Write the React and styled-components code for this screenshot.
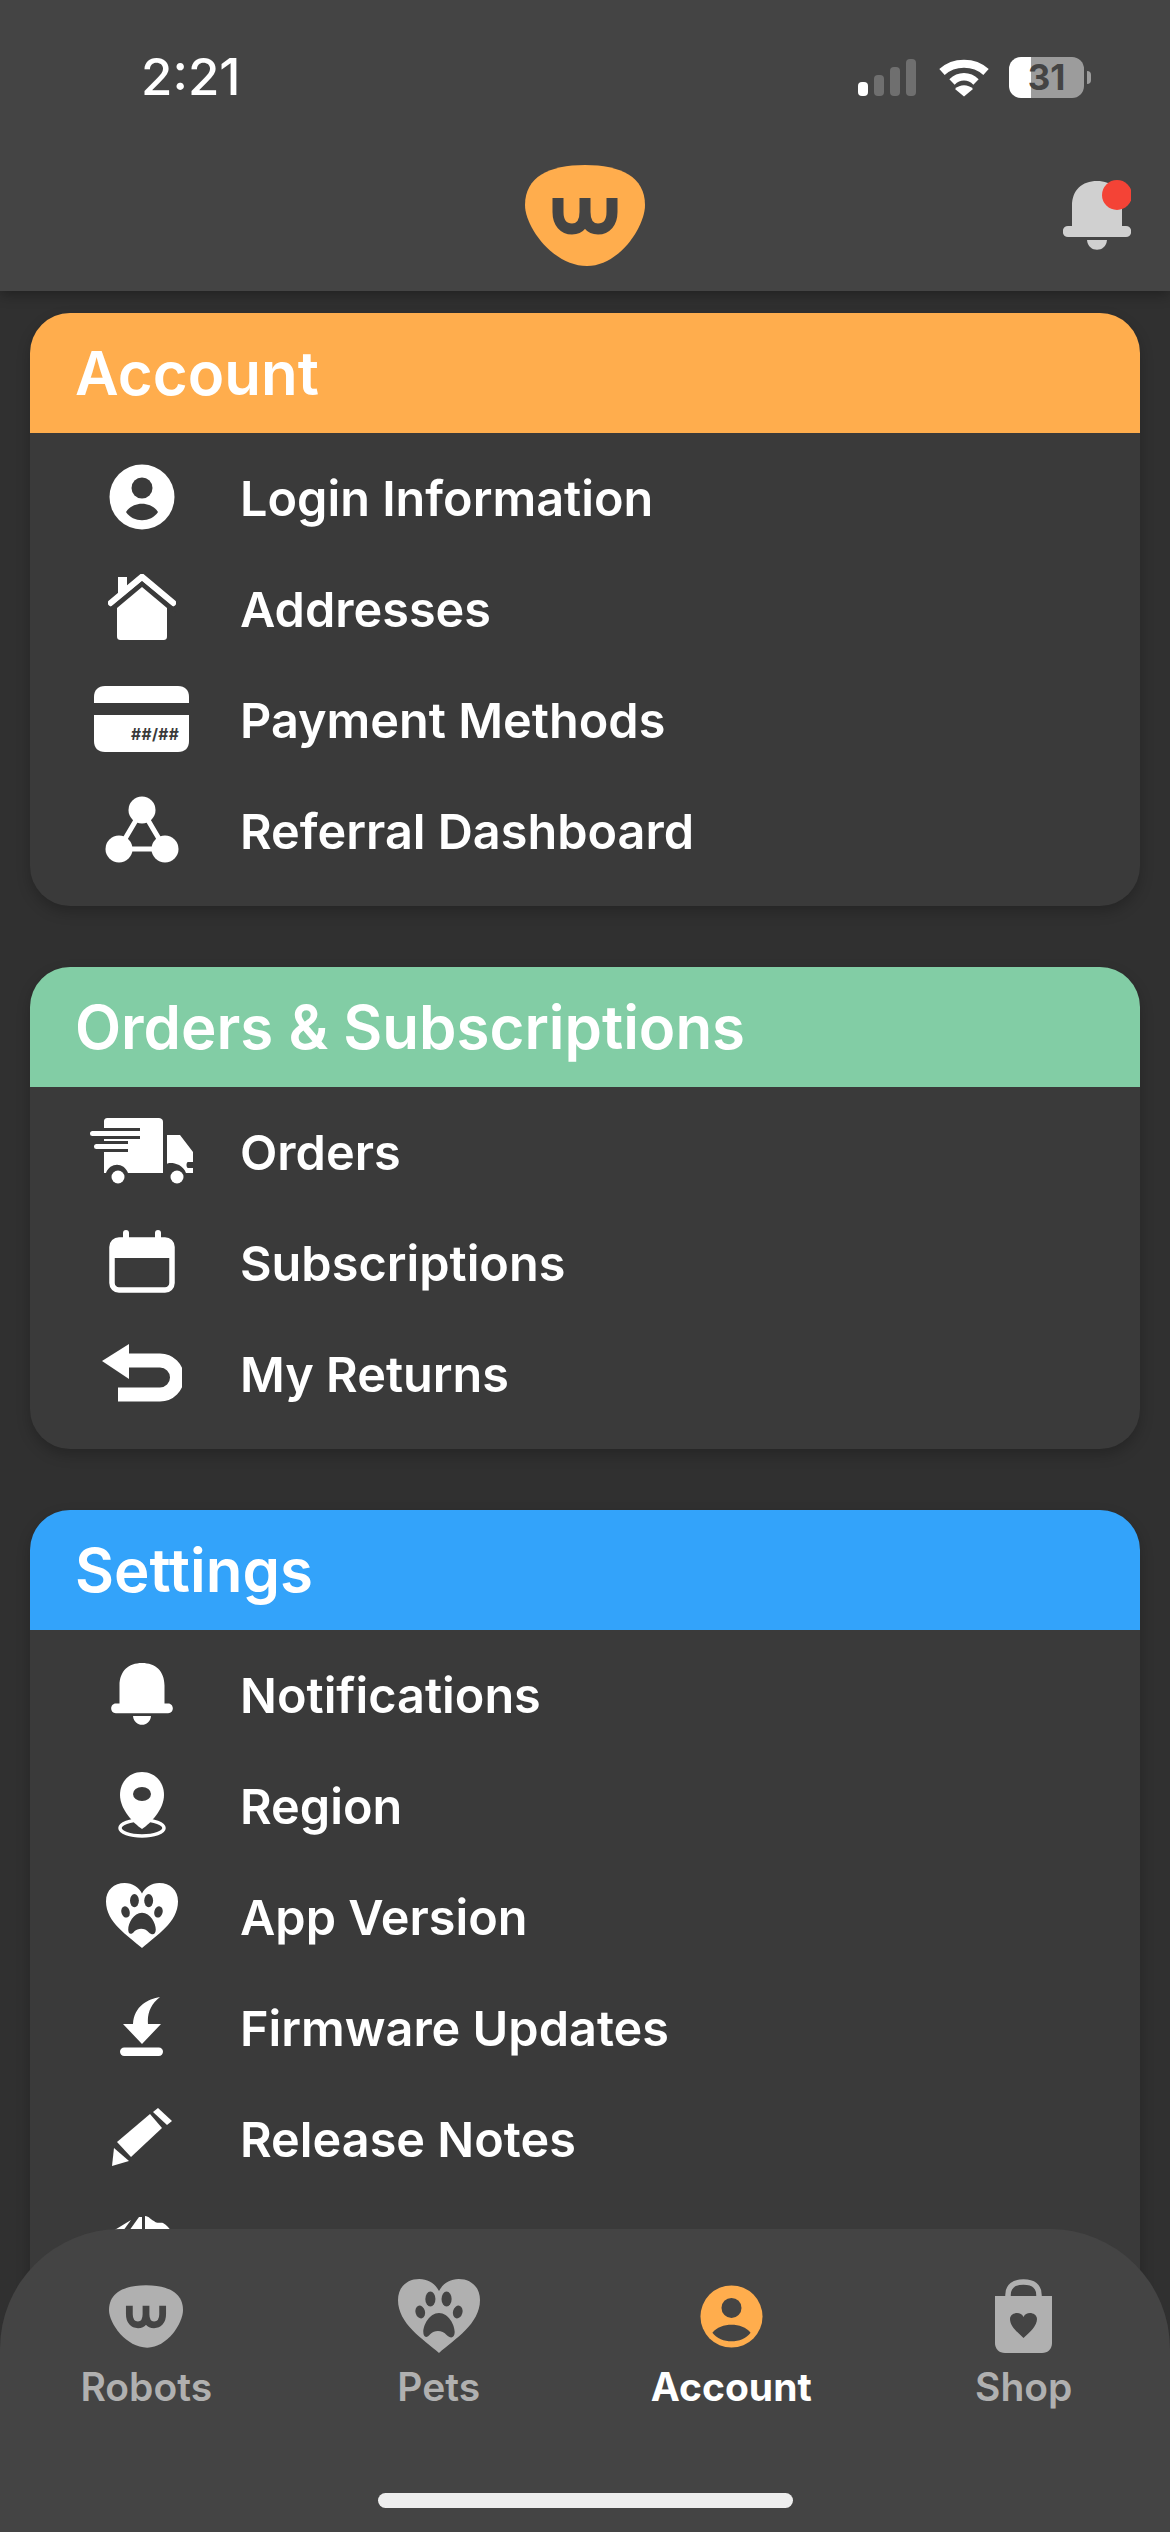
import React from 'react';
import styled, { createGlobalStyle } from 'styled-components';

const GlobalStyle = createGlobalStyle`
  html, body {
    margin: 0;
    padding: 0;
    background: #303030;
    font-family: 'Inter', 'Liberation Sans', sans-serif;
  }
`;

const Screen = styled.div`
  position: relative;
  width: 1170px;
  height: 2532px;
  display: flex;
  flex-direction: column;
  overflow: hidden;
  background: #303030;
`;

const Header = styled.header`
  position: relative;
  z-index: 2;
  flex: none;
  height: 291px;
  background: #444444;
  box-shadow: 0 4px 12px rgba(0, 0, 0, 0.3);
`;

const StatusBar = styled.div`
  height: 165px;
  display: flex;
  align-items: flex-start;
  justify-content: space-between;
  padding: 0 79px 0 141px;
  box-sizing: border-box;
`;

const Clock = styled.span`
  margin-top: 47px;
  font-size: 51px;
  line-height: 60px;
  font-weight: 500;
  color: #ffffff;
`;

const StatusIcons = styled.div`
  display: flex;
  align-items: center;
  gap: 22px;
  margin-top: 57px;
`;

const Battery = styled.div`
  width: 75px;
  height: 41px;
  border-radius: 12px;
  overflow: hidden;
  background: linear-gradient(to right, #ffffff 30%, #9c9c9c 30%);
  display: flex;
  align-items: center;
  justify-content: center;
`;

const BatteryText = styled.span`
  font-size: 35px;
  font-weight: 700;
  line-height: 41px;
  color: #444444;
`;

const BatteryGroup = styled.div`
  display: flex;
  align-items: center;
  gap: 3px;
  margin-left: -3px;
`;

const BatteryNub = styled.div`
  width: 4px;
  height: 13px;
  border-radius: 0 7px 7px 0;
  background: #9c9c9c;
`;

const TopBar = styled.div`
  display: grid;
  grid-template-columns: 1fr 120px 1fr;
  align-items: flex-start;
`;

const LogoSlot = styled.div`
  grid-column: 2;
  display: flex;
`;

const BellSlot = styled.div`
  grid-column: 3;
  justify-self: end;
  margin: 15px 39px 0 0;
  display: flex;
`;

const Content = styled.main`
  flex: 1;
  min-height: 0;
  padding: 22px 30px 0;
  display: flex;
  flex-direction: column;
  gap: 61px;
  overflow: hidden;
`;

const Card = styled.section`
  flex: none;
  border-radius: 40px;
  overflow: hidden;
  background: #3a3a3a;
  box-shadow: 0 6px 14px rgba(0, 0, 0, 0.22);
`;

const CardHeader = styled.h2`
  margin: 0;
  height: 120px;
  padding-left: 45px;
  display: flex;
  align-items: center;
  background: ${(p) => p.$color};
  color: #ffffff;
  font-size: 60px;
  font-weight: 600;
`;

const CardBody = styled.div`
  padding: 8px 0 21px;
`;

const Row = styled.div`
  height: 111px;
  display: flex;
  align-items: center;
`;

const IconSlot = styled.div`
  flex: none;
  width: 197px;
  margin-left: 13px;
  display: flex;
  align-items: center;
  justify-content: center;
`;

const RowLabel = styled.span`
  margin-top: 3px;
  font-size: 48.6px;
  font-weight: 600;
  color: #ffffff;
`;

const BottomNav = styled.nav`
  position: absolute;
  z-index: 3;
  left: 0;
  right: 0;
  bottom: 0;
  height: 303px;
  border-radius: 120px 120px 0 0;
  background: #444444;
  box-sizing: border-box;
  padding-top: 50px;
`;

const Tabs = styled.div`
  display: grid;
  grid-template-columns: repeat(4, 1fr);
`;

const Tab = styled.div`
  display: flex;
  flex-direction: column;
  align-items: center;
`;

const TabIcon = styled.div`
  height: 74px;
  display: flex;
  align-items: center;
  justify-content: center;
`;

const TabLabel = styled.span`
  margin-top: 12px;
  font-size: 39px;
  line-height: 44px;
  font-weight: ${(p) => (p.$active ? 700 : 600)};
  color: ${(p) => (p.$active ? '#ffffff' : '#b0b0b0')};
`;

const HomeBar = styled.div`
  position: absolute;
  left: 378px;
  bottom: 24px;
  width: 415px;
  height: 15px;
  border-radius: 8px;
  background: #eeeeee;
`;

const DARK = '#3a3a3a';
const NAV = '#444444';
const MUTED = '#b0b0b0';

const Signal = () => (
  <svg width="58" height="37" viewBox="0 0 58 37">
    <rect x="0" y="23" width="10" height="14" rx="4" fill="#fff" />
    <rect x="16" y="16" width="10" height="21" rx="4" fill="#6f6f6f" />
    <rect x="32" y="8" width="10" height="29" rx="4" fill="#6f6f6f" />
    <rect x="48" y="0" width="10" height="37" rx="4" fill="#6f6f6f" />
  </svg>
);

const Wifi = () => (
  <svg width="52" height="38" viewBox="0 0 52 38" fill="none">
    <path d="M4 13 C16 2 36 2 48 13" stroke="#fff" strokeWidth="8" />
    <path d="M14 23 C21 16 31 16 38 23" stroke="#fff" strokeWidth="7.5" />
    <path d="M26 37.5 L17 30 C22 25 30 25 35 30 Z" fill="#fff" />
  </svg>
);

const Logo = ({ width, height, fill, mark }) => (
  <svg width={width} height={height} viewBox="0 0 120 101" fill="none">
    <path
      d="M60 0 C96 0 120 12 120 40 C120 62 94 101 62 101 C28 101 0 62 0 40 C0 12 24 0 60 0 Z"
      fill={fill}
    />
    <path
      d="M33 33 V47 C33 58 39 64 47 64 C55 64 60 58 60 47 V33 M60 47 C60 58 65 64 73 64 C81 64 87 58 87 47 V33"
      stroke={mark}
      strokeWidth="11"
    />
  </svg>
);

const BellShape = ({ width, height, fill, dot }) => (
  <svg width={width} height={height} viewBox="0 0 68 70">
    <path
      d="M9 46 V26 C9 10 19 1 34 1 C49 1 59 10 59 26 V46 H63 C70 46 70 57 63 57 H5 C-2 57 -2 46 5 46 Z"
      fill={fill}
    />
    <path d="M24 60 H44 C43 73 25 73 24 60 Z" fill={fill} />
    {dot && <circle cx="54" cy="15" r="15" fill="#f44336" />}
  </svg>
);

const PersonCircle = ({ size, fill, cut, wide }) => (
  <svg width={size} height={size} viewBox="0 0 66 66">
    <circle cx="33" cy="33" r="32.5" fill={fill} />
    <circle cx="33" cy="24" r="10.5" fill={cut} />
    {wide ? (
      <path d="M13 50 C22 39 44 39 53 50 C44 62 22 62 13 50 Z" fill={cut} />
    ) : (
      <path d="M17 48 C24 37 42 37 49 48 C42 59 24 59 17 48 Z" fill={cut} />
    )}
  </svg>
);

const HouseIcon = () => (
  <svg width="68" height="67" viewBox="0 0 68 67" fill="#fff">
    <path d="M34 13 L59 34 V62 C59 65 58 66 55 66 H13 C10 66 9 65 9 62 V34 Z" />
    <path d="M10 3 H19 V17 L10 25 Z" />
    <path d="M3 29 L34 3 L65 29" fill="none" stroke="#fff" strokeWidth="6.5" strokeLinecap="round" />
    <path d="M0 37 L34 9 L68 37" fill="none" stroke={DARK} strokeWidth="3" />
  </svg>
);

const CardIcon = () => (
  <svg width="95" height="66" viewBox="0 0 95 66">
    <path d="M0 17 V11 C0 4 4 0 11 0 H84 C91 0 95 4 95 11 V17 Z" fill="#fff" />
    <path d="M0 29 H95 V55 C95 62 91 66 84 66 H11 C4 66 0 62 0 55 Z" fill="#fff" />
    <text x="37" y="54" fontFamily="Inter, sans-serif" fontSize="15.5" fontWeight="700" fill={DARK} letterSpacing="0.4">
      ##/##
    </text>
  </svg>
);

const NetworkIcon = () => (
  <svg width="74" height="67" viewBox="0 0 74 67" fill="#fff">
    <path d="M37 14 L14 53 H60 Z" fill="none" stroke="#fff" strokeWidth="5" />
    <circle cx="37" cy="14" r="13.5" />
    <circle cx="14" cy="53" r="13.5" />
    <circle cx="60" cy="53" r="13.5" />
  </svg>
);

const TruckIcon = () => (
  <svg width="104" height="66" viewBox="0 0 104 66" fill="#fff">
    <path d="M14 4 C14 1 15 0 18 0 H68 C71 0 73 1 73 4 V55 H38 C34 44 20 44 16 55 H14 Z" />
    <path d="M77 17 H90 L103 34 V44 H98 C96 44 96 50 98 50 H103 V55 H96 C92 44 78 44 77 46 Z" />
    <rect x="14" y="10" width="36" height="3" fill={DARK} />
    <rect x="14" y="18" width="36" height="3" fill={DARK} />
    <rect x="14" y="23" width="24" height="3" fill={DARK} />
    <rect x="14" y="31" width="24" height="3" fill={DARK} />
    <rect x="0" y="13" width="50" height="5" rx="2.5" />
    <rect x="4" y="26" width="33" height="5" rx="2.5" />
    <circle cx="28" cy="59" r="6.5" />
    <circle cx="87" cy="59" r="6.5" />
  </svg>
);

const CalendarIcon = () => (
  <svg width="66" height="63" viewBox="0 0 66 63">
    <rect x="3" y="10" width="60" height="50" rx="7" fill="none" stroke="#fff" strokeWidth="5.5" />
    <rect x="3" y="10" width="60" height="18" rx="6" fill="#fff" />
    <rect x="3" y="20" width="60" height="8" fill="#fff" />
    <rect x="14" y="0" width="6" height="14" rx="3" fill="#fff" />
    <rect x="46" y="0" width="6" height="14" rx="3" fill="#fff" />
  </svg>
);

const ReturnIcon = () => (
  <svg width="80" height="58" viewBox="0 0 80 58" fill="none">
    <path d="M27 0 V35 L0 17 Z" fill="#fff" />
    <path d="M24 16.5 H58 A17 17 0 0 1 58 50.5 H16" stroke="#fff" strokeWidth="14" />
  </svg>
);

const PinIcon = () => (
  <svg width="48" height="66" viewBox="0 0 48 66">
    <ellipse cx="24" cy="56" rx="22" ry="8" fill="none" stroke="#fff" strokeWidth="3.5" />
    <path d="M24 0 C37 0 46 10 46 23 C46 37 33 51 24 57 C15 51 2 37 2 23 C2 10 11 0 24 0 Z" fill="#fff" />
    <ellipse cx="24" cy="22" rx="9" ry="7" fill={DARK} />
  </svg>
);

const PawHeart = ({ width, height, fill, cut }) => (
  <svg width={width} height={height} viewBox="0 0 81 74" preserveAspectRatio="none">
    <path
      d="M40.5 74 C25 60 0 45 0 21 C0 8 9 0 21 0 C30 0 37 5 40.5 12 C44 5 51 0 60 0 C72 0 81 8 81 21 C81 45 56 60 40.5 74 Z"
      fill={fill}
    />
    <ellipse cx="32" cy="20" rx="5" ry="7.5" fill={cut} />
    <ellipse cx="48" cy="20" rx="5" ry="7.5" fill={cut} />
    <ellipse cx="22" cy="33" rx="4.7" ry="6.5" fill={cut} transform="rotate(-15 22 33)" />
    <ellipse cx="59" cy="33" rx="4.7" ry="6.5" fill={cut} transform="rotate(15 59 33)" />
    <path
      d="M40.5 34 C50 34 56 46 56 53 C56 59 52 60 48 56 C44 51 36 51 32 55 C28 60 25 58 25 53 C25 46 31 34 40.5 34 Z"
      fill={cut}
    />
  </svg>
);

const DownloadIcon = () => (
  <svg width="44" height="59" viewBox="0 0 44 59" fill="#fff">
    <path d="M40 0 C28 2 14 9 13 27 H3 L22 47 L41 27 H28 C27 16 31 7 40 0 Z" />
    <rect x="0" y="50.5" width="43" height="8.5" rx="4.2" />
  </svg>
);

const PencilIcon = () => (
  <svg width="60" height="59" viewBox="0 0 60 59" fill="#fff">
    <path d="M0 58 L2 40 L17 53 Z" />
    <path d="M5 34 L38 6 L50 20 L19 49 Z" />
    <path d="M41 4 L46 0 L60 13 L55 17 Z" />
  </svg>
);

const GlobeIcon = () => (
  <svg width="66" height="66" viewBox="0 0 66 66" fill="#fff">
    <path d="M4 15 L22 4 L14 15 Z" />
    <path d="M20 15 L30 1 L33 1 V15 Z" />
    <path d="M36 0 C40 0 42 4 45 5 C48 8 52 6 54 7 C58 9 60 12 62 15 H36 Z" />
    <path d="M4 17 H62 A33 33 0 1 1 4 17 Z" />
  </svg>
);

const BagIcon = () => (
  <svg width="57" height="74" viewBox="0 0 57 74">
    <path d="M13 20 V16 C13 7 19 3 28.5 3 C38 3 44 7 44 16 V20" fill="none" stroke={MUTED} strokeWidth="5.5" />
    <path d="M0 17 H57 V64 C57 70 53 74 47 74 H10 C4 74 0 70 0 64 Z" fill={MUTED} />
    <path
      d="M28.5 59 C22 53 15 47 15 40 C15 36 19 34 22 34 C25 34 27 35 28.5 38 C30 35 32 34 35 34 C38 34 42 36 42 40 C42 47 35 53 28.5 59 Z"
      fill={NAV}
    />
  </svg>
);

const WHITE_PROPS = { fill: '#fff', cut: DARK };

const sections = [
  {
    title: 'Account',
    color: '#ffad4d',
    rows: [
      { label: 'Login Information', icon: <PersonCircle size={66} {...WHITE_PROPS} /> },
      { label: 'Addresses', icon: <HouseIcon /> },
      { label: 'Payment Methods', icon: <CardIcon /> },
      { label: 'Referral Dashboard', icon: <NetworkIcon /> },
    ],
  },
  {
    title: 'Orders & Subscriptions',
    color: '#82cda5',
    rows: [
      { label: 'Orders', icon: <TruckIcon /> },
      { label: 'Subscriptions', icon: <CalendarIcon /> },
      { label: 'My Returns', icon: <ReturnIcon /> },
    ],
  },
  {
    title: 'Settings',
    color: '#33a3fa',
    rows: [
      { label: 'Notifications', icon: <BellShape width={62} height={63} fill="#fff" /> },
      { label: 'Region', icon: <PinIcon /> },
      { label: 'App Version', icon: <PawHeart width={72} height={65} {...WHITE_PROPS} /> },
      { label: 'Firmware Updates', icon: <DownloadIcon /> },
      { label: 'Release Notes', icon: <PencilIcon /> },
      { label: '', icon: <GlobeIcon /> },
    ],
  },
];

const tabs = [
  { label: 'Robots', icon: <Logo width={74} height={63} fill={MUTED} mark={NAV} /> },
  { label: 'Pets', icon: <PawHeart width={82} height={74} fill={MUTED} cut={NAV} /> },
  { label: 'Account', active: true, icon: <PersonCircle size={63} fill="#ffad4d" cut={NAV} wide /> },
  { label: 'Shop', icon: <BagIcon /> },
];

export default function App() {
  return (
    <Screen>
      <GlobalStyle />
      <Header>
        <StatusBar>
          <Clock>2:21</Clock>
          <StatusIcons>
            <Signal />
            <Wifi />
            <BatteryGroup>
              <Battery>
                <BatteryText>31</BatteryText>
              </Battery>
              <BatteryNub />
            </BatteryGroup>
          </StatusIcons>
        </StatusBar>
        <TopBar>
          <LogoSlot>
            <Logo width={120} height={101} fill="#ffad4d" mark="#444444" />
          </LogoSlot>
          <BellSlot>
            <BellShape width={68} height={70} fill="#d0d0d0" dot />
          </BellSlot>
        </TopBar>
      </Header>
      <Content>
        {sections.map((section) => (
          <Card key={section.title}>
            <CardHeader $color={section.color}>{section.title}</CardHeader>
            <CardBody>
              {section.rows.map((row, i) => (
                <Row key={i}>
                  <IconSlot>{row.icon}</IconSlot>
                  <RowLabel>{row.label}</RowLabel>
                </Row>
              ))}
            </CardBody>
          </Card>
        ))}
      </Content>
      <BottomNav>
        <Tabs>
          {tabs.map((tab) => (
            <Tab key={tab.label}>
              <TabIcon>{tab.icon}</TabIcon>
              <TabLabel $active={tab.active}>{tab.label}</TabLabel>
            </Tab>
          ))}
        </Tabs>
        <HomeBar />
      </BottomNav>
    </Screen>
  );
}
